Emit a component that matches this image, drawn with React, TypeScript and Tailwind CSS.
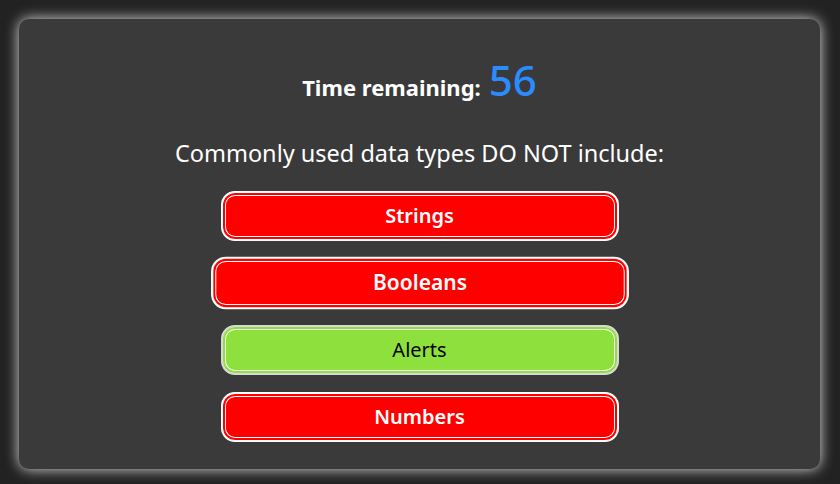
const answers = [
  { label: "Strings", correct: false, hover: false },
  { label: "Booleans", correct: false, hover: true },
  { label: "Alerts", correct: true, hover: false },
  { label: "Numbers", correct: false, hover: false },
];

function AnswerButton({ label, correct, hover }: { label: string; correct: boolean; hover: boolean }) {
  const base =
    "w-[398px] h-[50px] rounded-[14px] border-2 text-[20px] flex items-center justify-center transition-transform";
  const color = correct
    ? "bg-[#8ee03c] text-black border-[#d8d8d8] shadow-[inset_0_0_0_2px_#8ee03c,inset_0_0_0_3px_#ffffff]"
    : "bg-[#ff0000] text-white font-semibold border-white shadow-[inset_0_0_0_2px_#ff0000,inset_0_0_0_3px_#ffffff]";
  const hov = hover
    ? "scale-105 shadow-[inset_0_0_0_2px_#ff0000,inset_0_0_0_3px_#ffffff,0_0_24px_rgba(255,255,255,0.55)]"
    : "";
  return <button className={`${base} ${color} ${hov}`}>{label}</button>;
}

export default function App() {
  return (
    <div className="w-[840px] h-[484px] bg-[#222222] pt-[19px] pl-[19px] overflow-hidden" style={{ fontFamily: '"Noto Sans", sans-serif' }}>
      <div className="w-[801px] h-[450px] rounded-[10px] bg-[#3a3a3a] shadow-[0_0_14px_rgba(255,255,255,0.85)] flex flex-col items-center">
        <div className="mt-[40px] flex items-baseline gap-[8px] text-white">
          <span className="text-[22px] font-bold">Time remaining:</span>
          <span className="text-[42px] leading-none font-medium text-[#2b8cff]">56</span>
        </div>
        <p className="mt-[32px] text-[23.5px] text-white">Commonly used data types DO NOT include:</p>
        <div className="mt-[20px] flex flex-col gap-[17px]">
          {answers.map((a) => (
            <AnswerButton key={a.label} {...a} />
          ))}
        </div>
      </div>
    </div>
  );
}
